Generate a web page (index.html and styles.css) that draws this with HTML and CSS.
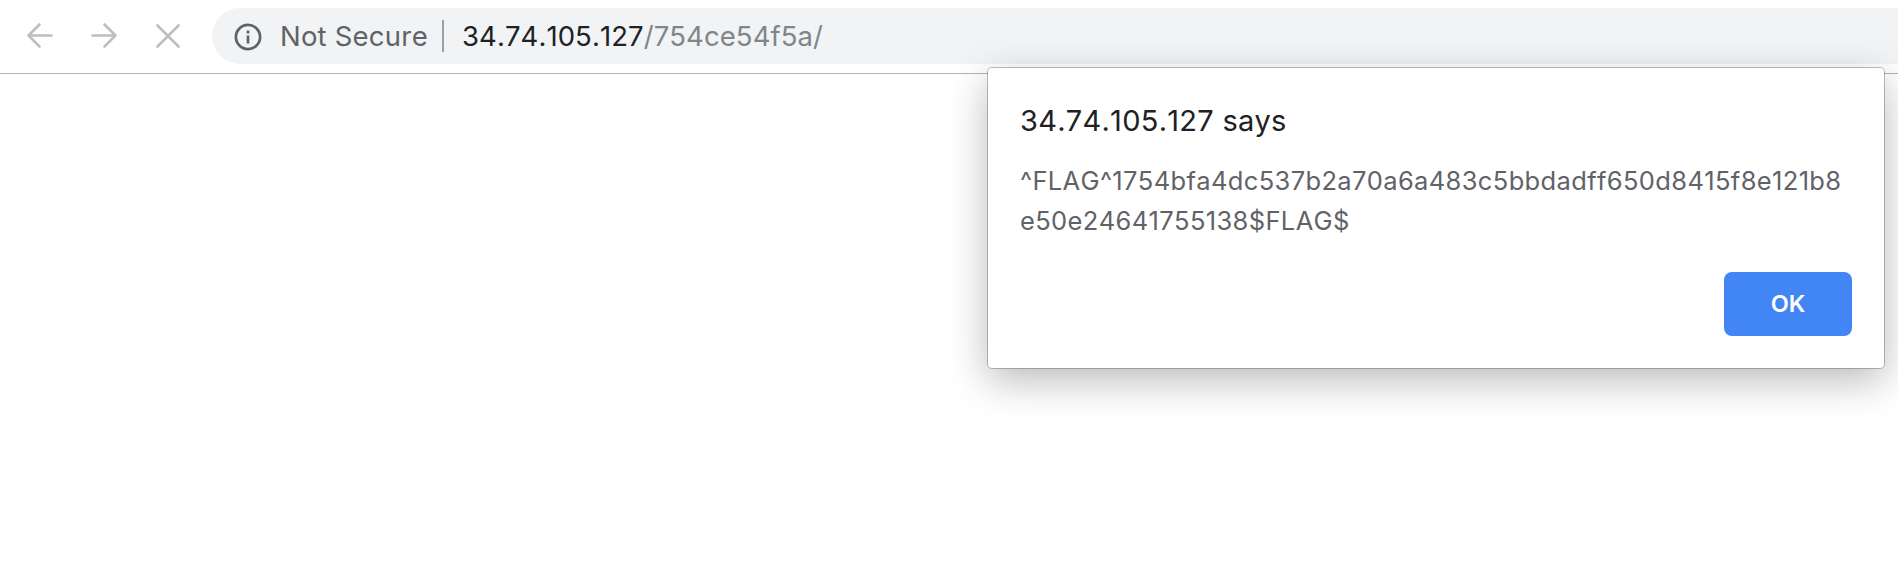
FILE: index.html
```
<!DOCTYPE html>
<html lang="en">
<head>
<meta charset="utf-8">
<title>34.74.105.127/754ce54f5a/</title>
<link rel="stylesheet" href="styles.css">
</head>
<body>
<header class="toolbar">
  <nav class="nav">
    <svg class="nav-icon" viewBox="0 0 32 32"><path d="M27.500 15.500H4.500M15.500 4.500L4.500 15.500L15.500 26.500"/></svg>
    <svg class="nav-icon" viewBox="0 0 32 32"><path d="M4.500 15.500H27.500M16.500 4.500L27.500 15.500L16.500 26.500"/></svg>
    <svg class="nav-icon" viewBox="0 0 32 32"><path d="M5.500 5.500L26.500 26.500M26.500 5.500L5.500 26.500"/></svg>
  </nav>
  <div class="omnibox">
    <svg class="info" viewBox="0 0 28 28"><circle cx="14" cy="14" r="12.100"/><path d="M14 12.500V20.500M14 7.500V10.500"/></svg>
    <span class="status">Not Secure</span>
    <span class="divider"></span>
    <span class="host">34.74.105.127</span><span class="path">/754ce54f5a/</span>
  </div>
</header>
<main class="page"></main>
<section class="dialog" role="alertdialog">
  <h1 class="title">34.74.105.127 says</h1>
  <p class="message">^FLAG^1754bfa4dc537b2a70a6a483c5bbdadff650d8415f8e121b8<br>e50e24641755138$FLAG$</p>
  <div class="actions"><button class="ok" type="button">OK</button></div>
</section>
</body>
</html>
```
FILE: styles.css
```
* { box-sizing: border-box; }
html, body { height: 100%; }
body {
  margin: 0;
  display: flex;
  flex-direction: column;
  overflow: hidden;
  background: #fff;
  font-family: Inter, "Liberation Sans", sans-serif;
  font-kerning: none;
}
.toolbar {
  display: flex;
  flex: none;
  height: 74px;
  padding-top: 8px;
  border-bottom: 1px solid #b4b4b5;
}
.nav {
  display: flex;
  align-items: center;
  gap: 32px;
  height: 56px;
  width: 212px;
  padding-left: 24px;
}
.nav-icon {
  width: 32px;
  height: 32px;
  fill: none;
  stroke: #bdbebf;
  stroke-width: 2.600;
  stroke-linecap: round;
  stroke-linejoin: round;
}
.omnibox {
  display: flex;
  align-items: center;
  flex: 1;
  height: 56px;
  padding-left: 22px;
  border-radius: 28px 0 0 28px;
  background: #f1f3f4;
  font-size: 27.500px;
  line-height: 56px;
  white-space: nowrap;
}
.info {
  width: 28px;
  height: 28px;
  margin-top: 1px;
  fill: none;
  stroke: #5f6368;
  stroke-width: 2.700;
}
.status { width: 162px; margin-left: 18px; color: #5f6368; letter-spacing: .2px; }
.divider { width: 2px; height: 32px; margin-right: 18px; background: #9aa0a6; }
.host { color: #202124; letter-spacing: .080px; }
.path { color: #80868b; letter-spacing: .080px; }
.page { flex: 1; }
.dialog {
  position: absolute;
  top: 68px;
  left: 988px;
  width: 896px;
  height: 300px;
  padding: 32px;
  border-radius: 4px;
  background: #fff;
  box-shadow: 0 0 0 1px rgba(0, 0, 0, .24), 0 12px 40px rgba(0, 0, 0, .28);
}
.title {
  margin: 0;
  font-size: 29px;
  font-weight: 400;
  line-height: 42px;
  letter-spacing: .270px;
  color: #202124;
}
.message {
  margin: 19px 0 0;
  font-size: 25.500px;
  line-height: 40px;
  letter-spacing: .360px;
  color: #5f6368;
  white-space: nowrap;
}
.actions { display: flex; justify-content: flex-end; margin-top: 31px; }
.ok {
  width: 128px;
  height: 64px;
  padding: 0;
  border: 0;
  border-radius: 8px;
  background: #4285f4;
  color: #fff;
  font: 600 23.500px/64px Inter, "Liberation Sans", sans-serif;
}
```
